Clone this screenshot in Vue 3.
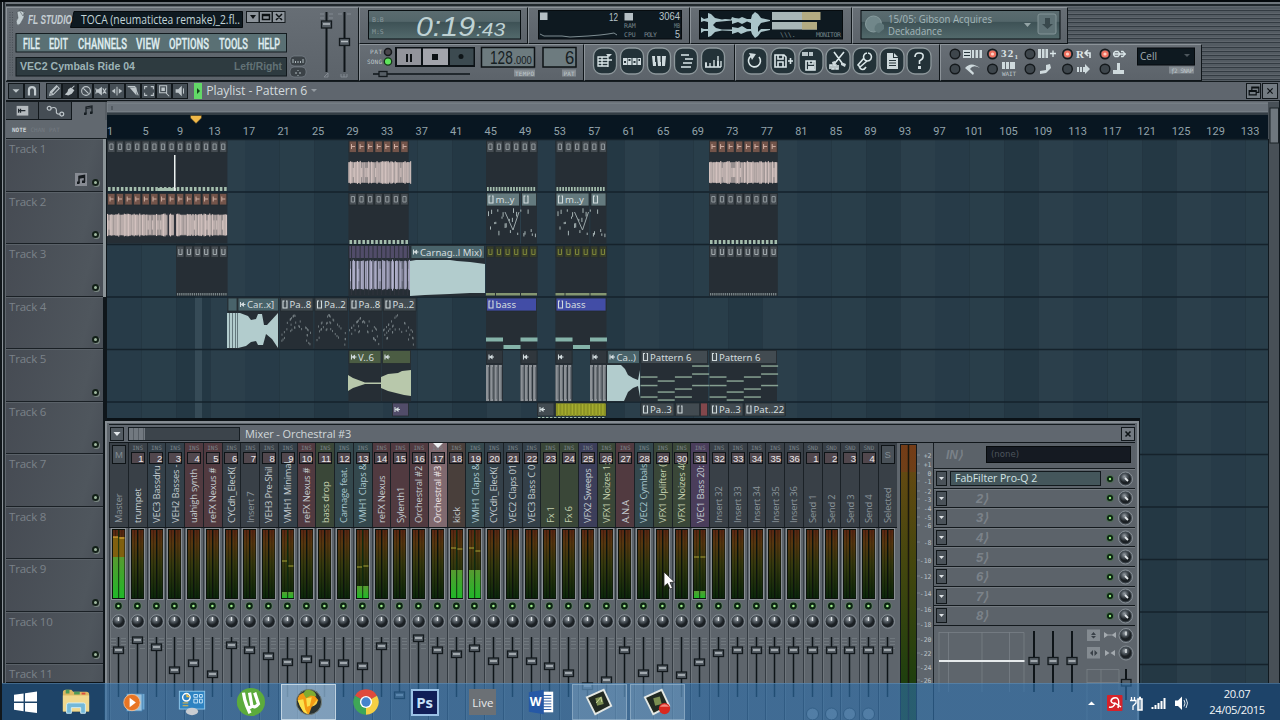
<script setup>
const menus = [
  ['FILE', 23, 17], ['EDIT', 49, 19], ['CHANNELS', 78, 49], ['VIEW', 136, 24],
  ['OPTIONS', 169, 40], ['TOOLS', 219, 29], ['HELP', 258, 22],
];

// s = stroked path, f = filled path, drawn on a 16x16 grid
const tools = [
  { s: 'M3 13L4 9L11 2L14 5L7 12Z M4 9L7 12', f: 'M4 9L11 2L12 3L5 11Z' },
  { s: 'M13 2L10 5', f: 'M9 4L13 7L10 11L6 13L2 12L5 9L6 6Z', on: true },
  { s: 'M8 3A5 5 0 1 0 8 13A5 5 0 1 0 8 3M5 5L11 11', f: '' },
  { s: 'M10 5L14 11M14 5L10 11M2 5L3 8L2 11', f: 'M3 6H5L9 3V13L5 10H3Z' },
  { s: 'M8 3V13', f: 'M6 5V11L2 8ZM10 5V11L14 8Z' },
  { s: 'M2 3H10L14 13', f: 'M4 4H12V13Z' },
  { s: 'M3 6V3H6M10 3H13V6M13 10V13H10M6 13H3V10', f: '' },
  { s: 'M3 2H11V10H3ZM10 10L14 14', f: 'M5 4H9V8H5Z' },
  { s: 'M12 5V11', f: 'M3 6H6L10 2V14L6 10H3Z' },
];

// drawn around 0,0
const windowButtons = [
  { x: 605, s: 'M-7 -4H3V5H-7ZM-7 -1H7M-7 2H3M-3 -4V5M3 -7V6', f: 'M1 -7H7L4 -4Z' },
  { x: 632, s: '', f: 'M-9 -3H-5V4H-9ZM-4.500 -3H-.5V4H-4.500ZM.5 -3H4.500V4H.5ZM5.500 -3H9V4H5.500Z', d: 'M-8 0H-6V2H-8ZM-3.500 -2H-1.500V0H-3.500ZM1.500 0H3.500V2H1.500ZM6.500 -2H8V0H6.500Z' },
  { x: 659, s: '', f: 'M-7 -5H-3V5H-6ZM-2 -5H2V5H-1ZM3 -5H7L6 5H3Z', d: 'M-4 -5H-2.500V1H-4ZM1.500 -5H3V1H1.500Z' },
  { x: 686, s: 'M-5 -6H3M-1 -2H7M-3 2H6M-5 6H5', f: '' },
  { x: 713, s: 'M-8 6H8M-7 6V1M-3 6V2M1 6V-1M5 6V-5M8 6V0', f: 'M-8 2H-6V6H-8ZM4 0H6V6H4Z' },
];
const fileButtons = [
  { x: 755, s: 'M-4 -5A6 6 0 1 0 4 -4', f: 'M-6 -8L1 -7L-3 -1Z' },
  { x: 783, s: 'M-8 -6H1L3 -4V6H-8ZM-5 -6V-2H0V-6M-5 6V1H0V6M5 0H10M7.500 -3V3', f: '' },
  { x: 811, s: 'M-5 0H4V9H-5ZM-2 0V3H2V0M-8 -9V-5M-6 -9V-5M-4 -5V-9M-1 -9V-5M1 -9V-5', f: 'M-3 5H3V9H-3Z' },
  { x: 838, s: 'M-4 -9L4 2M6 -9L-3 2M-8 8V4H-6V8H-4V4H-2V8H0V4', f: 'M-6 1L-3 0L-2 3L-5 5ZM3 1L8 3L7 6L3 4Z' },
  { x: 865, s: 'M3 -8A4 4 0 1 1 2 -8M-1 -3L-7 4L-5 6L2 0M-6 6Q-2 11 1 6', f: '' },
  { x: 892, s: '', f: 'M-5 -8H1V-3H6V8H-5ZM2 -8L6 -4H2Z', d: 'M-3 -1H4V0H-3ZM-3 1.500H4V2.500H-3ZM-3 4H4V5H-3Z' },
  { x: 919, s: 'M-4 -4Q-4 -8 0 -8Q5 -8 4 -4Q4 -2 .5 0V3', f: 'M-1 5H2V8H-1Z' },
];
const leds = [
  { x: 955, y: 54 }, { x: 992.5, y: 54, on: true }, { x: 1030, y: 54 }, { x: 1067.5, y: 54, on: true }, { x: 1105, y: 54, on: true },
  { x: 955, y: 69 }, { x: 992.5, y: 69 }, { x: 1030, y: 69 }, { x: 1067.5, y: 69 }, { x: 1105, y: 69 },
];

const bars = Array.from({ length: 34 }, (_, i) => ({ n: 1 + i * 4, x: i === 0 ? 110 : 145.5 + (i - 1) * 34.52 }));
const tracks = Array.from({ length: 11 }, (_, i) => i + 1);
const top = (t) => 139.5 + (t - 1) * 52.5;

const rnd = (n) => {
  const v = Math.sin(n * 91.7 + 13.3) * 4375.85;
  return v - Math.floor(v);
};

// playlist clips
const heads = [];
const bodies = [];
const labels = [];
const rects = [];
const marks = [];
// pattern clips carry a small open box, audio clips an arrow
const markPath = (x, y, audio) => (audio
  ? `M${x} ${y - 6}V${y - 1}M${x} ${y - 3.5}H${x + 5}M${x + 1} ${y - 3.5}L${x + 3} ${y - 5}V${y - 2}Z`
  : `M${x + 1.5} ${y - 7}H${x}V${y}H${x + 4}V${y - 7}H${x + 3}`);
const addMini = (t, x, count, kind) => {
  const y = top(t);
  bodies.push({ x, y: y + 1, w: count * 8.6, h: 50.5 });
  for (let i = 0; i < count; i++) {
    const cx = x + i * 8.6;
    heads.push({ x: cx + 0.6, y: y + 1.5, w: 7.4, h: 11.5, c: kind });
    marks.push({
      c: kind + '-m',
      d: kind === 'brown'
        ? `M${cx + 3} ${y + 4.5}V${y + 9.5}M${cx + 3} ${y + 7}H${cx + 6.5}`
        : `M${cx + 2.8} ${y + 4.5}V${y + 10}H${cx + 6}V${y + 4.5}${kind === 'gray' ? 'Z' : ''}`,
    });
  }
};
const addClip = (t, x, w, mark, text, kind, bodyH = 51) => {
  const y = top(t);
  bodies.push({ x, y: y + 1, w, h: bodyH });
  heads.push({ x: x + 0.5, y: y + 1, w: w - 1, h: 13, c: kind });
  if (mark) marks.push({ c: 'clip-m', d: markPath(x + 3, y + 11, mark === 'a') });
  if (text) labels.push({ x: x + 9.5, y: y + 11.3, t: text, c: 'clip-t' });
};
const addWave = (x, w, mid, half, c) => {
  rects.push({ x, y: mid - half * 0.9, w, h: half * 1.8, c: c + ' faint' });
  for (let i = 0; i < w; i += 1.4) {
    const r = rnd(i * 3 + x);
    const h = r > 0.85 ? half * 0.4 : half * (0.8 + r * 0.25);
    rects.push({ x: x + i, y: mid - h, w: r > 0.3 ? 1.1 : 0.6, h: h * 2, c });
  }
};
const addTicks = (x, w, y, h, step, c) => {
  for (let i = 1; i < w - 1; i += step) rects.push({ x: x + i, y, w: step * 0.6, h, c });
};

addMini(1, 107, 14, 'gray');
addTicks(107, 120, 187, 4, 4.3, 'pale');
rects.push({ x: 158, y: 188, w: 18, h: 3, c: 'pale' }, { x: 174, y: 155, w: 1.5, h: 36, c: 'white' });
addMini(1, 348.5, 7, 'brown');
addWave(348.5, 62, 172.5, 11.5, 'pink');
for (const x of [486, 555.5]) {
  addMini(1, x, 6, 'gray');
  addTicks(x, 51, 187, 4, 2.9, 'pale');
  addClip(2, x, 34, 'p', 'm..y', 'steel');
  addClip(2, x + 35, 16, 'p', '', 'steel');
  for (let i = 0; i < 24; i++) {
    rects.push({ x: x + 2 + ((i * 7.3) % 48), y: 208 + rnd(i + 4) * 29, w: 1, h: 2 + rnd(i) * 3, c: 'note' });
  }
  marks.push({ c: 'run', d: `M${x + 19} 212L${x + 27} 230L${x + 33} 212` });
  addMini(3, x, 6, 'olive');
  rects.push({ x, y: 293, w: 9, h: 2.5, c: 'green' }, { x: x + 10, y: 293, w: 24, h: 2.5, c: 'green' }, { x: x + 35, y: 293, w: 16, h: 2.5, c: 'green' });
  addClip(4, x, 51, 'p', 'bass', 'bass');
  rects.push({ x, y: 337.5, w: 17, h: 4, c: 'mint' }, { x: x + 17.5, y: 345, w: 17, h: 4, c: 'mint' }, { x: x + 34.5, y: 337.5, w: 17, h: 4, c: 'mint' });
  for (const dx of [0, 34.5]) {
    addClip(5, x + dx, 17, 'a', '', 'dark');
    for (let k = 0; k < 4; k++) {
      rects.push({ x: x + dx + k * 4.2, y: 365, w: 3.2, h: 36, c: 'ash' }, { x: x + dx + k * 4.2 + 2.2, y: 367, w: 0.7, h: 32, c: 'ashdark' });
    }
  }
}
addMini(1, 709, 8, 'brown');
addWave(709, 68, 172.5, 11.5, 'pink');

addMini(2, 107, 14, 'brown');
addWave(107, 120, 225, 11.5, 'pink');
rects.push({ x: 167.5, y: 213, w: 1.5, h: 24, c: 'gap' }, { x: 174, y: 213, w: 2, h: 24, c: 'gap' });
addMini(2, 348.5, 7, 'gray');
addTicks(348.5, 62, 240, 4, 4.3, 'pale');
addMini(2, 709, 8, 'gray');
addTicks(709, 68, 240, 4, 4.3, 'pale');

addMini(3, 176, 6, 'plain');
addTicks(176, 51, 293, 2.5, 2.1, 'dim');
addClip(3, 348.5, 61.5, '', '', 'purple');
addWave(350, 59, 275, 15.5, 'lilac');
for (let i = 0; i < 14; i++) rects.push({ x: 351 + i * 4.3, y: 246, w: 1, h: 49, c: 'gap' });
addClip(3, 410.5, 74.5, 'a', 'Carnag..l Mix)', 'teal');
addMini(3, 709, 8, 'plain');
addTicks(709, 68, 293, 2.5, 2.1, 'dim');

addClip(4, 227.5, 10, '', '', 'teal');
addClip(4, 237.5, 41.5, 'a', 'Car..x]', 'teal');
[[280, '8'], [314.5, '2'], [349, '8'], [383, '2']].forEach(([x, n]) => {
  addClip(4, x, 33.5, 'p', 'Pa..' + n, 'slate');
  for (let i = 0; i < 34; i++) {
    const px = rnd(i * 5 + x);
    const peak = Math.abs(px - 0.45) * 34;
    rects.push({ x: x + px * 31, y: 314 + peak + Math.floor(rnd(i + 2) * 3) * 6, w: 0.8, h: 2.2, c: 'spark' });
  }
});

addClip(5, 348.5, 33, 'a', 'V..6', 'moss');
addClip(5, 382, 29, 'a', '', 'moss');
addClip(5, 607, 33, 'a', 'Ca..)', 'teal');
for (const x of [640.5, 709.5]) {
  addClip(5, x, 67.5, 'p', 'Pattern 6', 'slate');
  [[377, 385.5, 397], [381, 392, 400], [377, 389, 397], [366, 374, 385.5]].forEach((ys, i) => {
    ys.forEach((y) => rects.push({ x: x + i * 17.2, y: y - 0.7, w: 17, h: 1.5, c: 'sage' }));
  });
}

addClip(6, 392, 17, 'a', '', 'purple', 13);
addClip(6, 537, 17.5, 'a', '', 'slate', 13);
addClip(6, 555, 51.5, '', '', 'yellow', 13);
addTicks(555, 51, 404, 12, 3.4, 'yellowline');
addTicks(537, 69, 417, 1.5, 4, 'pale');
addClip(6, 640.5, 34, 'p', 'Pa..3', 'slate', 13);
addClip(6, 675, 25, 'p', '', 'slate', 13);
addClip(6, 700, 8, '', '', 'red', 13);
addClip(6, 709.5, 34, 'p', 'Pa..3', 'slate', 13);
addClip(6, 744, 41.5, 'p', 'Pat..22', 'slate', 13);

// mixer strips: name, tint, fader position
const strips = [
  ['Master', 'plain dim', 650], ['trumpet', 'plain', 640], ['VEC3 Bassdru', 'blue', 647], ['VEH2 Basses -', 'blue', 670],
  ['uahigh synth', 'red', 663], ['reFX Nexus #', 'red', 674], ['CYCdh_ElecK(', 'plain', 645], ['Insert 7', 'plain dim', 650],
  ['VEH3 Pre-Shil', 'plain', 656], ['VMH1 Minimal', 'blue', 662], ['reFX Nexus #', 'red', 659], ['bass drop', 'green', 663],
  ['Carnage feat.', 'teal', 663], ['VMH1 Claps &', 'teal', 666], ['reFX Nexus', 'red', 646], ['Sylenth1', 'red', 695],
  ['Orchestral #2', 'red', 638], ['Orchestral #3', 'picked', 650], ['kick', 'brown', 654], ['VMH1 Claps &', 'teal', 648],
  ['CYCdh_ElecK(', 'blue', 661], ['VEC2 Claps 01', 'blue', 654], ['VEC3 Bass C 0', 'blue', 661], ['Fx 1', 'green', 666],
  ['Fx 6', 'green', 673], ['VFX2 Sweeps', 'purple', 686], ['VFX1 Noizes 1:', 'green', 680], ['A.N.A', 'red', 650],
  ['VEC2 Cymbals', 'teal', 673], ['VFX1 Uplifter (', 'green', 668], ['VFX1 Noizes 4(', 'green', 675], ['VEC1 Bass 20:', 'violet', 662],
  ['Insert 32', 'plain dim', 653], ['Insert 33', 'plain dim', 650], ['Insert 34', 'plain dim', 650], ['Insert 35', 'plain dim', 650],
  ['Insert 36', 'plain dim', 650], ['Send 1', 'plain dim', 650], ['Send 2', 'plain dim', 650], ['Send 3', 'plain dim', 650],
  ['Send 4', 'plain dim', 650], ['Selected', 'plain dim', 650],
].map(([name, tint, fader], i) => ({
  name, tint, fader,
  kind: i === 0 || i === 41 ? '' : i > 36 ? 'SND' : 'INS',
  num: i === 0 ? 'M' : i === 41 ? 'S' : i > 36 ? i - 36 : i,
  plain: i === 0 || i === 41,
}));
// top of the green part, then left and right peak marks
const levels = { 0: [557, 537, 538], 9: [592, 561, 566], 13: [586, 567, 566], 18: [570, 548, 549], 19: [570, 548, 551], 31: [591, 557, 557] };

const scale = [
  ['+2', 455], ['+1', 464], ['0', 473], ['-1', 481], ['-2', 491], ['-3', 499], ['-4', 508], ['-5', 517], ['-6', 525],
  ['-8', 542], ['-10', 560], ['-12', 576], ['-14', 593], ['-16', 609], ['-18', 624], ['-20', 639], ['-22', 653], ['-24', 667], ['-26', 680],
];
const slots = [1, 2, 3, 4, 5, 6, 7, 8];
</script>

<template>
  <div class="screen">
    <header class="top">
      <section class="panel main-panel">
        <svg viewBox="7 8 350 72" width="350" height="72">
          <path class="grip" d="M10 12V76M12.500 12V76" />
          <path class="logo" d="M17 12Q22 9 24 13Q25 17 22 21Q20 26 17 25Q15 21 18 18ZM19 10L25 12L23 16Z" />
          <path class="lcd-dark" d="M74 11.500H242.500V27.500H70.500Z" />
          <text class="brand" transform="translate(28 24) scale(.62 1)">FL STUDIO</text>
          <text class="song" x="81" y="24" textLength="159" lengthAdjust="spacingAndGlyphs">TOCA (neumatictea remake)_2.fl..</text>
          <rect v-for="x in [247, 260, 273]" :key="x" class="win-btn" :x="x - .5" y="11.500" width="12.500" height="11" />
          <path class="ink-fill" d="M250 15H256L253 19Z" />
          <path class="ink" d="M262.500 14.500H269.500V19.500H262.500ZM262 15.500H270M276 14L282 20M282 14L276 20" />
          <rect class="menu-bg" x="16" y="33.500" width="270.500" height="18.500" />
          <text v-for="m in menus" :key="m[0]" class="menu" :transform="`translate(${m[1]} 48.500) scale(.66 1)`" :textLength="m[2] / .66" lengthAdjust="spacingAndGlyphs">{{ m[0] }}</text>
          <rect class="hint-bg" x="16" y="57.500" width="270.500" height="18.500" />
          <text class="hint" x="20" y="70" textLength="115" lengthAdjust="spacingAndGlyphs">VEC2 Cymbals Ride 04</text>
          <text class="hint off" x="234" y="70" textLength="48" lengthAdjust="spacingAndGlyphs">Left/Right</text>
          <rect class="pill" x="290" y="56" width="16" height="10" rx="4" /><rect class="pill" x="290" y="67" width="16" height="10" rx="4" />
          <path class="glyph" d="M293 63V59M295.500 63V61M298 63V61M300.500 63V61M303 63V59M295 73H297M299 73H301M298 70V71M298 75V76" />
          <path class="rail" d="M326.500 12V72M344.500 12V72" />
          <path class="tickmark" d="M320 14H324M329 14H333M320 18H324M329 18H333M338 14H342M347 14H351M324 77L328 73V77ZM341 74V77H347V74M344 74V77" />
          <rect class="thumb" x="321.500" y="21" width="10" height="7" /><rect class="thumb" x="339.500" y="38.500" width="10" height="7" />
          <path class="thumb-line" d="M323 24H330M341 41.500H348" />
        </svg>
      </section>

      <div class="top-rows">
        <div class="top-row">
          <section class="panel w-time">
            <svg viewBox="360 8 166 35" width="166" height="35">
              <defs><linearGradient id="lcd" x2="0" y2="1"><stop offset="0" stop-color="#5b6c70" /><stop offset=".38" stop-color="#53666a" /><stop offset=".42" stop-color="#3e5256" /><stop offset="1" stop-color="#536a6c" /></linearGradient></defs>
              <rect class="lcd" x="368.500" y="10.500" width="152" height="28.500" />
              <text class="tiny faded" x="372" y="22">B:B</text><text class="tiny faded" x="372" y="34">M:S</text>
              <text class="clock" x="416" y="35.500" textLength="59" lengthAdjust="spacingAndGlyphs">0:19</text>
              <text class="clock small" x="476" y="35.500" textLength="29" lengthAdjust="spacingAndGlyphs">:43</text>
            </svg>
          </section>
          <section class="panel w-perf">
            <svg viewBox="529 8 160 35" width="160" height="35">
              <rect class="lcd-dark" x="538.500" y="10.500" width="143" height="28.500" />
              <path class="bar" d="M540 12.500H547.500V20H540ZM624.500 13H633V20.500H624.500Z" />
              <text class="digit" x="609" y="20.500" textLength="9" lengthAdjust="spacingAndGlyphs">12</text>
              <text class="digit" x="659" y="20" textLength="21" lengthAdjust="spacingAndGlyphs">3064</text>
              <text class="digit" x="675" y="37.500" textLength="5" lengthAdjust="spacingAndGlyphs">5</text>
              <text class="tiny" x="624" y="27.500">RAM</text><text class="tiny" x="674" y="27.500" textLength="6" lengthAdjust="spacingAndGlyphs">MB</text>
              <text class="tiny" x="624" y="37">CPU</text><text class="tiny" x="644" y="37" textLength="13">POLY</text>
              <path class="graph" d="M540 34L544 36H562L570 37L588 36L600 35L608 34L614 33L617 35" />
            </svg>
          </section>
          <section class="panel w-scope">
            <svg viewBox="691 8 160 35" width="160" height="35">
              <rect class="lcd-dark" x="699.500" y="10.500" width="143" height="28.500" />
              <path class="scope" d="M701 17L704 19L708 18V13L711 14L715 18L722 19.500L725 19L731 19.500L732 17L735 18L739 18.500L742 17L747 19H751L752 15L755 12L758 14L761 18L770 20V21L761 23L758 27V32L761 29H770V30L761 32L758 36L755 38L752 34L751 31L747 31.500L741 34L738 32L732 34V31L722 30.500L715 32L711 36L708 37V31L704 31L701 33V28L704 29H708V22L704 21L701 22ZM716 22L713 25L716 28L722 29.500H732V27L738 28L742 26L747 29H751V23L747 21.500L742 24L738 22L732 24V20.500Z" fill-rule="evenodd" />
              <path d="M772 12H820V20H772ZM772 22H817V29.500H772Z" fill="#a9b7b8" />
              <path d="M802 12H820.500V20H802ZM802 22H817V29.500H802Z" fill="#b3ab82" />
              <text class="tiny" x="780" y="37">\\\.</text><text class="tiny" x="816" y="37" textLength="25">MONITOR</text>
            </svg>
          </section>
          <section class="panel w-news">
            <svg viewBox="853 8 214 35" width="214" height="35">
              <rect class="lcd" x="861" y="10.500" width="199" height="28.500" />
              <circle cx="873.500" cy="24" r="8" class="globe" /><path d="M875 26Q879 20 884 25V29L879 33Q873 32 875 26Z" fill="#60777a" />
              <text class="news" x="888" y="23" textLength="104" lengthAdjust="spacingAndGlyphs">15/05: Gibson Acquires</text>
              <text class="news" x="888" y="35" textLength="54" lengthAdjust="spacingAndGlyphs">Deckadance</text>
              <path d="M1024 23H1031L1027.500 27Z" fill="#94a4a6" />
              <rect x="1038" y="14" width="18" height="20" rx="2" class="download" /><path d="M1045 18H1050V24H1053L1047.500 29L1042 24H1045Z" fill="#39494d" />
            </svg>
          </section>
          <div class="stripes"></div>
        </div>
        <div class="top-row">
          <section class="panel w-transport">
            <svg viewBox="360 45 222 35" width="222" height="35">
              <text class="tiny lit" x="370" y="54" textLength="12">PAT</text><text class="tiny lit" x="367" y="64" textLength="15">SONG</text>
              <circle class="led-ring" cx="388" cy="52" r="3.500" /><circle class="led-green" cx="388" cy="61.500" r="3.700" />
              <rect x="395" y="47" width="80" height="20" fill="#0c1216" />
              <rect x="397" y="48.500" width="24" height="16.500" fill="#92949b" /><rect x="423" y="48.500" width="25" height="16.500" fill="#a2a4ab" /><rect x="450" y="48.500" width="23.500" height="16.500" fill="#3c4a50" />
              <path class="ink-fill" d="M406 54H408V62H406ZM410 54H412V62H410ZM432 54H438V60H432Z" /><circle cx="461" cy="56.500" r="2.500" fill="#0e1518" />
              <rect class="lcd-light" x="481.500" y="47.500" width="53" height="19.500" /><rect class="lcd-light" x="543" y="47.500" width="33" height="19.500" />
              <text class="tempo" transform="translate(490 64) scale(.74 1)">128</text>
              <text class="tempo mini" transform="translate(513.500 64) scale(.9 1)">.000</text>
              <text class="tempo" transform="translate(565 64) scale(.9 1)">6</text>
              <rect class="tag" x="514" y="69.500" width="21" height="7" /><rect class="tag" x="562" y="69.500" width="14" height="7" />
              <text class="tiny lit" x="515" y="75.500" textLength="19">TEMPO</text><text class="tiny lit" x="563.500" y="75.500" textLength="11">PAT</text>
              <path class="rail thin" d="M373 74H470" /><rect class="thumb" x="379" y="71.500" width="8" height="5" />
            </svg>
          </section>
          <section class="panel w-wins">
            <svg viewBox="585 45 149 35" width="149" height="35">
              <g v-for="b in windowButtons" :key="b.x" :transform="`translate(${b.x} 61)`">
                <rect class="round-btn" x="-11.500" y="-13" width="23" height="26" rx="8" />
                <path class="glyph bright" :d="b.s" /><path class="glyph-fill" :d="b.f" /><path v-if="b.d" class="glyph-cut" :d="b.d" />
              </g>
            </svg>
          </section>
          <section class="panel w-files">
            <svg viewBox="736 45 203 35" width="203" height="35">
              <g v-for="b in fileButtons" :key="b.x" :transform="`translate(${b.x} 61)`">
                <rect class="round-btn" x="-12" y="-13" width="24" height="26" rx="8" />
                <path class="glyph bright heavy" :d="b.s" /><path class="glyph-fill" :d="b.f" /><path v-if="b.d" class="glyph-cut" :d="b.d" />
              </g>
            </svg>
          </section>
          <section class="panel w-opts">
            <svg viewBox="941 45 260 35" width="260" height="35">
              <g v-for="(l, i) in leds" :key="i">
                <circle class="led-opt" :cx="l.x" :cy="l.y" r="4.800" /><circle v-if="l.on" :cx="l.x" :cy="l.y" r="3.600" fill="#ef6f5e" /><circle v-if="l.on" :cx="l.x" :cy="l.y" r="1.600" fill="#ffd0c4" />
              </g>
              <path class="glyph-fill" d="M963 50H971V58H963ZM972 50H974V58H972ZM975.500 50H978V58H975.500ZM979.500 50H982V58H979.500ZM1038 49H1041V58H1038ZM1042 49H1044.500V58H1042ZM1045.500 49H1048V58H1045.500ZM1002 62H1005V69H1002ZM1006 62H1009V69H1006ZM1010 62H1015V69H1010ZM965 68Q971 61 980 68Q973 64 970 69L974 73L973 75ZM1046 65L1050 64L1051 68L1046 73L1040 74V71L1046 70ZM1077 67H1079V72H1077ZM1080 67H1082V72H1080ZM1083 67H1085V64L1090 69L1085 74V72H1083ZM1117 63H1120V70H1124V74H1113V70H1117Z" />
              <path class="glyph-cut" d="M964 52H970V53H964ZM964 55H970V56H964Z" />
              <path class="glyph bright" d="M1050 53.500H1056M1053 50.500V57M1113 54H1126M1115 51.500H1118Q1121 54 1118 56.500H1115Q1112 54 1115 51.500M1121 51.500H1123Q1126 54 1123 56.500H1121" />
              <text class="opt" x="1001" y="57" textLength="17">32₁</text><text class="opt" x="1076" y="58">R</text><path class="glyph bright heavy" d="M1085 53H1090V58M1088 50L1085 53L1088 56" />
              <text class="tiny lit" x="1002" y="75.500" textLength="14">WAIT</text>
              <rect class="lcd-dark" x="1137.500" y="48" width="57" height="17" /><text class="cell" x="1140" y="60" textLength="17" lengthAdjust="spacingAndGlyphs">Cell</text>
              <path d="M1184 54H1190L1187 57Z" fill="#4c565c" /><rect class="tag" x="1169" y="66.500" width="25" height="7" /><text class="tiny lit" x="1171" y="72.500" textLength="22">ƒ2 SNAP</text>
            </svg>
          </section>
          <div class="stripes"></div>
        </div>
      </div>
    </header>

    <nav class="toolbar">
      <div class="group">
        <span class="tool"><svg viewBox="0 0 16 16"><path class="w" d="M4 6H12L8 10Z" /></svg></span>
        <span class="tool"><svg viewBox="0 0 16 16"><path class="o" d="M4.500 13V7Q4.500 3.500 8 3.500Q11.500 3.500 11.500 7V13" /></svg></span>
      </div>
      <div class="group">
        <span v-for="(t, i) in tools" :key="i" class="tool" :class="{ on: t.on }">
          <svg viewBox="0 0 16 16"><path class="w" :d="t.f" /><path class="l" :d="t.s" /></svg>
        </span>
      </div>
      <span class="play-flag"><svg viewBox="0 0 8 16"><path d="M3 5L6 8L3 11Z" /></svg></span>
      <span class="pl-title">Playlist - Pattern 6</span><svg class="drop" viewBox="0 0 8 6"><path d="M1 1H7L4 4Z" /></svg>
      <div class="group end">
        <span class="tool"><svg viewBox="0 0 16 16"><path class="k" d="M5.500 7V3.500H13.500V9.500H10.500M5 4.500H13M2.500 7.500H10.500V12.500H2.500ZM2 8.500H10" /></svg></span>
        <span class="tool"><svg viewBox="0 0 16 16"><path class="k" d="M5 5L11 11M11 5L5 11" /></svg></span>
      </div>
    </nav>

    <main class="playlist">
      <aside class="side">
        <div class="tabs">
          <span class="tab"><svg viewBox="0 0 33 18"><rect x="11" y="4" width="12" height="10" fill="#b4babe" /><path d="M13 7V11M13 9H20M15 7V11" stroke="#20282e" stroke-width="1.300" /></svg></span>
          <span class="tab"><svg viewBox="0 0 33 18"><path class="l" d="M12 6.500Q18 4 18 9Q17 13 22 12.500" /><circle class="l" cx="10.500" cy="6.500" r="2" /><circle class="l" cx="23.500" cy="12.500" r="2" /></svg></span>
          <span class="tab active"><svg viewBox="0 0 33 18"><path d="M14 12V5L20 4V11M14 6.500L20 5.500" stroke="#171e23" stroke-width="1.200" fill="none" /><path d="M12 10.500H14.500V13H12ZM18 9.500H20.500V12H18Z" fill="#171e23" /></svg></span>
        </div>
        <div class="modes"><b>NOTE</b><span>CHAN</span><span>PAT</span></div>
        <div class="track-list">
          <div v-for="t in tracks" :key="t" class="track" :class="{ used: t < 4 }">
            <span class="track-name">Track {{ t }}</span>
            <svg v-if="t === 1" class="note-box" viewBox="0 0 12 13"><path d="M0 0H12V13H0Z" fill="#878b93" /><path d="M4 10V3.500L9.500 2.500V9M4 5L9.500 4" stroke="#14191d" stroke-width="1.500" fill="none" /><path d="M2 8.500H4.500V11H2ZM7 7.500H10V10H7Z" fill="#14191d" /></svg>
            <i class="dot"></i>
          </div>
        </div>
      </aside>
      <svg class="arrange" viewBox="107 101 1173 619" width="1173" height="619">
        <defs>
          <pattern id="bands" x="107" y="0" width="138" height="60" patternUnits="userSpaceOnUse">
            <rect width="138" height="60" fill="#273b48" /><rect x="34" width="35" height="60" fill="#293e4a" /><rect x="69" width="34" height="60" fill="#243844" /><rect x="103" width="35" height="60" fill="#2b3f4b" />
            <path d="M34.500 0V60M69.500 0V60M103.500 0V60" stroke="#22343f" stroke-width=".7" />
          </pattern>
          <clipPath id="view"><rect x="107" y="139" width="1161" height="280" /></clipPath>
        </defs>
        <rect x="107" y="101" width="1173" height="619" fill="#5f666d" />
        <rect class="hscroll" x="107" y="103" width="1162" height="9" />
        <path d="M112 106V110" stroke="#3a4248" />
        <rect x="107" y="112.500" width="1162" height="3" fill="#333d44" />
        <rect x="107" y="115" width="1162" height="24" fill="#081621" />
        <text v-for="b in bars" :key="b.n" class="bar-no" :x="b.x" y="135">{{ b.n }}</text>
        <path d="M190.500 115.500H201.500V118L196 123.500L190.500 118Z" fill="#f0b848" stroke="#3c3420" stroke-width=".5" />
        <rect x="107" y="139" width="1161" height="544" fill="url(#bands)" />
        <rect x="195" y="139" width="7" height="281" fill="#435964" opacity=".6" />
        <path v-for="t in tracks" :key="'l' + t" class="track-line" :d="`M107 ${top(t)}H1268`" />
        <g clip-path="url(#view)">
          <rect v-for="(b, i) in bodies" :key="'b' + i" class="body" :x="b.x" :y="b.y" :width="b.w" :height="b.h" />
          <rect v-for="(h, i) in heads" :key="'h' + i" class="head" :class="h.c" :x="h.x" :y="h.y" :width="h.w" :height="h.h" />
          <rect v-for="(r, i) in rects" :key="'r' + i" :class="r.c" :x="r.x" :y="r.y" :width="r.w" :height="r.h" />
          <path class="mass" d="M410 261L416 260H450L457 261L470 262L485 264V293L470 293L450 294L425 295L410 296Z" />
          <path class="mass" d="M227 313L240 313L248 316L251 320L256 319L258 314H262L264 325H267L278 313V348L272 339L266 334L263 345H258L256 341L251 342L246 346L238 348H227Z" />
          <path d="M229.500 313V348M232.500 313V348M235.500 313V348M237.500 313V348" stroke="#44555c" stroke-width=".7" />
          <path class="mass green" d="M348 375L353 378L365 382.500H381V377L388 374L398 373L402 371L411 370V396L404 395L396 393L388 391L381 388V384H365L353 388L348 391Z" />
          <path class="mass" d="M607 365H621L625 369L628 375L633 378L638 380L640 370V397L638 386L633 388L628 392L624 401H607Z" />
          <path v-for="(m, i) in marks" :key="'m' + i" class="mark" :class="m.c" :d="m.d" />
          <text v-for="(l, i) in labels" :key="'t' + i" :class="l.c" :x="l.x" :y="l.y">{{ l.t }}</text>
        </g>
        <rect x="107" y="418" width="1033" height="3" fill="#0a1116" />
        <rect x="1268" y="102" width="12" height="581" fill="#485057" /><rect class="vthumb" x="1270" y="108" width="8.500" height="35" />
        <path d="M1268.500 139V683" stroke="#11191f" /><path d="M1279.500 101V683" stroke="#11191f" />
      </svg>
    </main>

    <section class="mixer">
      <div class="mix-title">
        <span class="mix-btn"><svg viewBox="0 0 12 12"><path d="M2.500 4H9.500L6 8Z" fill="#e2e7ea" /></svg></span>
        <span class="mix-scroll"><i></i></span>
        <span class="mix-name">Mixer - Orchestral #3</span>
        <span class="mix-btn close"><svg viewBox="0 0 12 12"><path d="M3.500 3.500L8.500 8.500M8.500 3.500L3.500 8.500" stroke="#0e1417" stroke-width="1.600" /></svg></span>
      </div>
      <div class="mix-body">
        <div class="strips">
          <div v-for="(s, i) in strips" :key="i" class="strip">
            <div class="strip-head" :class="s.tint">
              <span class="kind">{{ s.kind }}</span>
              <span class="num" :class="{ letter: s.plain }">{{ s.num }}</span>
              <span class="name">{{ s.name }}</span>
              <i v-if="i === 17" class="pick"></i>
            </div>
            <svg class="strip-svg" viewBox="0 528 18.750 192" width="18.750" height="192">
              <rect class="frame" x="2.500" y="528.500" width="14" height="71" />
              <rect x="4" y="530" width="5" height="68" fill="url(#meter)" /><rect x="10.400" y="530" width="5" height="68" fill="url(#meter)" />
              <path d="M6.500 530V598M12.900 530V598" stroke="#000" stroke-width="1" opacity=".25" />
              <g v-if="levels[i]">
                <rect v-if="i === 0" x="4" y="537" width="11.400" height="20" fill="#80600f" />
                <rect x="4" :y="levels[i][0]" width="11.400" :height="598 - levels[i][0]" fill="url(#level)" />
                <path :d="`M4 ${levels[i][1]}H9.200M10.200 ${levels[i][2]}H15.400`" :stroke="i === 0 ? '#f0b840' : '#a5a336'" stroke-width="1.200" />
                <path d="M9.700 530V598" stroke="#123010" stroke-width="1" />
              </g>
              <circle cx="9.400" cy="606" r="4.500" fill="#5e7865" /><circle cx="9.400" cy="606" r="3.400" fill="#0c2412" /><circle cx="9.400" cy="606" r="1.300" fill="#a0f08c" />
              <circle cx="9.700" cy="621.500" r="6.800" class="knob-ring" /><circle cx="9.700" cy="621.500" r="5.800" fill="url(#knob)" /><path d="M9.500 617V621" stroke="#e0e4e6" stroke-width="1.300" />
              <path class="scale-lines" d="M2 638.500H7M12 638.500H17M2 641.500H7M12 641.500H17M2 644.500H7M12 644.500H17M2 648.500H7M12 648.500H17" />
              <path class="rail thin" d="M9.500 637V697" />
              <rect class="thumb" x="4.500" :y="s.fader - 3" width="10" height="6.500" /><path class="thumb-line" :d="`M6 ${s.fader}H13`" />
              <circle v-if="i > 36 && i < 41" cx="9.500" cy="714" r="6" fill="#8b949c" stroke="#3c444b" />
              <path d="M.5 528V720" stroke="#343b42" stroke-width="1" /><path d="M1.500 600V720" stroke="#7a8188" stroke-width=".6" />
            </svg>
          </div>
        </div>
        <svg class="big-meter" viewBox="898 443 36 277" width="36" height="277">
          <defs>
            <linearGradient id="meter" x2="0" y2="1"><stop offset="0" stop-color="#5a2713" /><stop offset=".2" stop-color="#56370f" /><stop offset=".5" stop-color="#35390e" /><stop offset="1" stop-color="#0b260b" /></linearGradient>
            <linearGradient id="level" x2="0" y2="1"><stop offset="0" stop-color="#579a30" /><stop offset="1" stop-color="#20b828" /></linearGradient>
            <radialGradient id="knob" cx=".4" cy=".3"><stop offset="0" stop-color="#9aa1a7" /><stop offset=".5" stop-color="#525a61" /><stop offset="1" stop-color="#1b2024" /></radialGradient>
            <linearGradient id="big" x2="0" y2="1"><stop offset="0" stop-color="#743c17" /><stop offset=".1" stop-color="#6e3f18" /><stop offset=".1" stop-color="#624912" /><stop offset=".4" stop-color="#47470e" /><stop offset=".85" stop-color="#1f3f0e" /></linearGradient>
          </defs>
          <rect x="900.500" y="444.500" width="16" height="276" fill="url(#big)" stroke="#12181c" /><path d="M908.500 445V720" stroke="#1a170c" stroke-width="1.500" />
          <g v-for="n in scale" :key="n[0]"><text class="db" x="931.500" :y="n[1] + 2.500">{{ n[0] }}</text><path :d="`M917 ${n[1]}H920`" stroke="#90979d" stroke-width=".6" /></g>
          <path d="M933.500 443V720" stroke="#191f24" />
        </svg>
        <div class="fx">
          <div class="fx-in"><span class="in">IN⟩</span><span class="none">(none)</span></div>
          <div v-for="n in slots" :key="n" class="slot">
            <span class="slot-btn"><svg viewBox="0 0 9 13"><path d="M2 5H7L4.500 8Z" fill="#dfe4e7" /></svg></span>
            <span v-if="n === 1" class="slot-name">FabFilter Pro-Q 2</span>
            <span v-else class="slot-no">{{ n }}⟩</span>
            <svg class="slot-ctl" viewBox="0 0 32 18" width="32" height="18"><circle cx="7" cy="9" r="4" fill="#4d6a54" /><circle cx="7" cy="9" r="3" fill="#0a2410" /><circle cx="7" cy="9" r="1.200" fill="#90e878" /><circle cx="22.500" cy="9" r="7" class="knob-ring" /><circle cx="22.500" cy="9" r="5.500" fill="url(#knob)" /><path d="M22 8L25 11" stroke="#e4e8ea" stroke-width="1.800" /></svg>
          </div>
          <svg class="eq" viewBox="934 626 202 94" width="202" height="94">
            <path class="eq-grid" d="M939 632.500H1024V692M939 632V692M948.500 632V692M982 632V692M1009.500 632V692M1087 669.500H1119V690M1101 669V720M1087 682.500H1119M1087 669V720" />
            <path d="M939 661H1024.500" stroke="#e6eaec" stroke-width="2" />
            <g v-for="x in [1034, 1053, 1072]" :key="x">
              <path class="rail" :d="`M${x} 631V692`" /><rect class="thumb" :x="x - 5" y="657.500" width="10" height="7" /><path class="thumb-line" :d="`M${x - 3.500} 661H${x + 3.500}`" />
              <circle cx="0" :cx="x" cy="714" r="6" fill="#8b949c" stroke="#3c444b" />
            </g>
            <path class="rail" d="M1126 669V700" /><rect class="thumb" x="1121.500" y="679.500" width="9.500" height="6.500" />
            <rect class="tag" x="1087" y="629.500" width="13" height="11.500" /><rect class="tag" x="1087" y="647" width="13" height="11.500" />
            <path d="M1093.500 632L1096 635H1091ZM1093.500 638.500L1096 636H1091ZM1090 653L1093 650V656ZM1097.500 653L1094.500 650V656Z" fill="#3a4148" />
            <path d="M1104 632L1108.500 635L1104 638ZM1116 632L1111.500 635L1116 638ZM1108 634.500H1112V635.500H1108ZM1105 650L1109.500 653L1105 656ZM1115 650L1110.500 653L1115 656Z" fill="#a3a9ae" />
            <g v-for="y in [635.5, 653]" :key="y"><circle class="knob-ring" cx="1126" :cy="y" r="7" /><circle cx="1126" :cy="y" r="5.500" fill="url(#knob)" /><path :d="`M1126 ${y - 4}V${y}`" stroke="#e0e4e6" stroke-width="1.500" /></g>
          </svg>
        </div>
      </div>
    </section>

    <svg class="cursor" viewBox="0 0 14 20"><path d="M1 1V15.500L4.500 12.500L7 18L9.500 17L7 11.500L11.500 11Z" fill="#fff" stroke="#222" stroke-width=".8" /></svg>

    <footer class="taskbar">
      <span class="start"><svg viewBox="0 0 26 24" width="25" height="23"><path d="M1 4L11 2.500V11H1ZM12.500 2.300L25 .5V11H12.500ZM1 12.500H11V21L1 19.500ZM12.500 12.500H25V23L12.500 21.300Z" fill="#fff" /></svg></span>
      <span class="task"><svg viewBox="0 0 32 32"><path d="M2 6Q2 3 5 3H11L13 5H27Q30 5 30 8V26H2Z" fill="#dcb863" /><path d="M5 3H9V7H5ZM14 5H20V8H14Z" fill="#4e9a58" /><path d="M22 6H26V8H22Z" fill="#d94f3e" /><path d="M2 9H30V26H2Z" fill="#f1d98e" /><path d="M6 28V19Q6 17 8 17H24Q26 17 26 19V28H21V22H11V28Z" fill="#73b8d8" stroke="#d0eef8" /></svg></span>
      <span class="task"><svg class="sm" viewBox="0 0 32 32"><path d="M10 5H30V25H10Z" fill="#6da7d2" /><path d="M7 5H27V27H7Z" fill="#9bc4df" stroke="#3d7aaa" /><circle cx="14" cy="16" r="10.500" fill="#e87524" stroke="#f7c79b" /><path d="M11 10L19 16L11 22Z" fill="#fff" /></svg></span>
      <span class="task"><svg viewBox="0 0 32 32"><rect x="2.500" y="4.500" width="27" height="19" fill="#2e83c2" stroke="#91c8ea" /><circle cx="10" cy="11" r="4" fill="none" stroke="#fff" stroke-width="1.500" /><path d="M10 7V11H14Z" fill="#f4bd3a" /><path d="M18 8H22V11H18ZM24 8H27V11H24ZM18 13H22V17H18ZM24 13H27V17H24Z" stroke="#cce8fa" fill="none" /><path d="M6 17H12M6 20H12" stroke="#f4bd3a" /><ellipse cx="16" cy="26" rx="6.500" ry="4" fill="#c9cdd2" /></svg></span>
      <span class="task"><svg viewBox="0 0 32 32"><circle cx="17" cy="16" r="15" fill="#5cab3c" /><path d="M9 6Q10 14 12.500 20Q15 24 18 20L15.500 6M18 20Q21.500 23 25 18L21 6M12.500 20L16 28" fill="none" stroke="#fff" stroke-width="3.500" /></svg></span>
      <span class="task active"><svg viewBox="0 0 32 32"><circle cx="17" cy="16" r="13.500" fill="#2a3231" stroke="#76827f" /><path d="M5 14Q5 8 11 6L22 8L27 14L20 21L17 29L11 27Z" fill="#f39a14" /><path d="M5 14L11 13L13 24L16 29Q9 27 5 14ZM14 12L20 11L18 20L15 21Z" fill="#fbe04c" /><path d="M11 7Q13 2 17 3Q24 4 25 10L19 9L14 12Z" fill="#7fab31" /><path d="M20 21L26 13Q27 19 20 21Z" fill="#fbd045" /></svg></span>
      <span class="task"><svg viewBox="0 0 32 32"><path d="M16 16L4.300 9.250A13.500 13.500 0 0 1 27.700 9.250Z" fill="#df4a3c" /><path d="M16 16L16 29.500A13.500 13.500 0 0 1 4.300 9.250Z" fill="#3ea657" /><path d="M16 16L27.700 9.250A13.500 13.500 0 0 1 16 29.500Z" fill="#f6cf43" /><circle cx="16" cy="16" r="6.500" fill="#fff" /><circle cx="16" cy="16" r="5" fill="#4584cc" /></svg></span>
      <span class="task"><b class="ps">Ps</b></span>
      <span class="task"><b class="live">Live</b></span>
      <span class="task"><svg viewBox="0 0 32 32"><rect x="16" y="5" width="13" height="22" fill="#fff" /><path d="M18 9H27M18 12H27M18 15H27M18 18H27M18 21H27M18 24H27" stroke="#2958a0" stroke-width="1" /><path d="M3 5.500L19 3V29L3 26.500Z" fill="#2558a6" /><text x="4" y="20.500" class="word">W</text></svg></span>
      <span class="task open"><svg viewBox="0 0 32 32"><path d="M3 11L21 3L29 20L12 29Z" fill="#222a22" stroke="#e4e8e4" stroke-width="2" /><path d="M12 12L19 10L21 18L14 20Z" fill="#7c8f52" /><path d="M13 17L18 11L19 16" stroke="#d0dca0" fill="none" /></svg></span>
      <span class="task open"><svg viewBox="0 0 32 32"><path d="M3 11L21 3L29 20L12 29Z" fill="#222a22" stroke="#e4e8e4" stroke-width="2" /><path d="M12 12L19 10L21 18L14 20Z" fill="#7c8f52" /><circle cx="24" cy="23" r="6" fill="#d9281f" /><path d="M19 21Q24 16 29 21Z" fill="#f38a7e" /></svg></span>
      <div class="tray">
        <svg viewBox="1088 683 114 37" width="114" height="37">
          <path d="M1091 704L1094.500 700.500L1098 704Z" fill="#fff" />
          <rect x="1110" y="694" width="15.500" height="16" rx="1" fill="#d6222a" /><path d="M1112 706Q1116 707 1118 703M1121 707Q1123 699 1120 697Q1115 696 1114 700Q1115 703 1118 702L1124 706" stroke="#fff" stroke-width="1.500" fill="none" />
          <path d="M1133 699.500H1139V702L1136 705V709M1134.500 696V700M1137.500 696V700" stroke="#fff" stroke-width="1.300" fill="none" /><path d="M1141 698H1145V709H1141ZM1142 696.500H1144" stroke="#fff" stroke-width="1.500" fill="#8ea6bb" />
          <path d="M1155.500 708V706M1158.500 708V704M1161.500 708V702M1164.500 708V700M1167.500 708V697" stroke="#fff" stroke-width="2" />
          <path d="M1178 699.500H1181L1185 695.500V709L1181 705H1178Z" fill="#fff" /><path d="M1187 699Q1189 702 1187 705.500M1189 697.500Q1192 702 1189 707" stroke="#dce6ee" fill="none" />
        </svg>
        <div class="time"><span>20.07</span><span>24/05/2015</span></div>
      </div>
    </footer>
  </div>
</template>

<style>
body { background: #0b1722; overflow: hidden; }
</style>

<style scoped>
.screen {
  position: relative;
  width: 1280px;
  height: 720px;
  box-sizing: border-box;
  overflow: hidden;
  display: flex;
  flex-direction: column;
  padding-left: 6px;
  border-top: 2px solid #05090c;
  background: #5f666d;
  font-family: "Open Sans", "Noto Sans", sans-serif;
  box-shadow: inset 2px 0 #11171b, inset 3px 0 #8b9298, inset 5px 0 #22292e;
}
svg { display: block; }

/* header */
.top { display: flex; height: 79px; flex: none; box-sizing: border-box; padding-top: 5px; background: linear-gradient(#6f767c 0 2px, #20272c 2px 4px, #5f666d 4px); }
.top-rows { flex: 1; display: flex; flex-direction: column; gap: 0; min-width: 0; }
.top-row { display: flex; height: 37px; gap: 0; }
.panel { flex: none; box-sizing: border-box; border: 1px solid; border-color: #8c9399 #10161a #10161a #8c9399; background: linear-gradient(#676e75, #5c636a); overflow: hidden; }
.main-panel { width: 353px; height: 74px; }
.w-time { width: 169px; }
.w-perf { width: 162px; }
.w-scope { width: 162px; }
.w-news { width: 216px; }
.w-transport { width: 225px; }
.w-wins { width: 151px; }
.w-files { width: 205px; }
.w-opts { width: 262px; }
.stripes { flex: 1; background: repeating-linear-gradient(#535b62 0 2px, #5e656c 2px 3px, #333b42 3px 4px); }

.grip { stroke: #4a5157; stroke-width: 1; stroke-dasharray: 1 1.500; }
.logo { fill: #c3ced2; stroke: #3e474c; stroke-width: .5; }
.brand { font: italic bold 13.500px "Liberation Sans", sans-serif; fill: #c5ced3; }
.lcd-dark { fill: #0e1920; stroke: #060b0e; }
.song { font: 12px "Open Sans", sans-serif; fill: #c2d5d8; }
.win-btn { fill: #8c939a; stroke: #161c20; }
.ink { fill: none; stroke: #0c1114; stroke-width: 1.500; }
.ink-fill { fill: #0c1114; }
.menu-bg { fill: #5a7074; stroke: #141c20; }
.menu { font: 500 14.500px Roboto, sans-serif; fill: #dfecef; stroke: #dfecef; stroke-width: .3; }
.hint-bg { fill: #2e3b40; stroke: #11181c; }
.hint { font: bold 10.500px "Liberation Sans", sans-serif; fill: #9db3b6; }
.hint.off { fill: #627276; }
.pill { fill: #3b4247; stroke: #79818a; stroke-width: .7; }
.glyph { fill: none; stroke: #aeb9be; stroke-width: 1; }
.glyph.bright { stroke: #dce8ea; stroke-width: 1.300; }
.glyph.heavy { stroke-width: 1.600; }
.glyph-fill { fill: #cfdadd; }
.glyph-cut { fill: #29373d; }
.rail { stroke: #0e1418; stroke-width: 2; fill: none; }
.rail.thin { stroke-width: 1.500; }
.tickmark { stroke: #8b9299; fill: none; stroke-width: .8; }
.thumb { fill: #565e65; stroke: #13191d; stroke-width: 1.300; }
.thumb-line { stroke: #b5bcc1; stroke-width: 1.600; }
.lcd { fill: url(#lcd); stroke: #090f12; }
.tiny { font: 6.500px "DejaVu Sans Mono", monospace; fill: #76868b; }
.tiny.lit { fill: #bdc6ca; font-size: 6px; }
.tiny.faded { fill: #8a999c; }
.clock { font: italic 28px "Liberation Sans", sans-serif; fill: #bfd2d4; }
.clock.small { font-size: 19px; }
.bar { fill: #b5bfc4; }
.digit { font: 11px "Liberation Sans", sans-serif; fill: #b8c5cb; }
.graph { stroke: #7e8d92; fill: none; }
.scope { fill: #abc5ca; }
.globe { fill: #71878a; stroke: #879b9d; }
.news { font: 10.500px "Open Sans", sans-serif; fill: #a4b7ba; }
.download { fill: #5f7276; stroke: #839497; }
.led-ring { fill: #4a474c; stroke: #15191c; stroke-width: 1.500; }
.led-green { fill: #5fe65c; stroke: #16341a; stroke-width: 1.300; }
.lcd-light { fill: #6d7b7f; stroke: #0d1215; stroke-width: 1.500; }
.tempo { font: 18.500px "Liberation Sans", sans-serif; fill: #162023; }
.tempo.mini { font-size: 10.500px; }
.tag { fill: #848b91; }
.round-btn { fill: #233238; stroke: #8d979b; stroke-width: 1.300; }
.led-opt { fill: #3e464c; stroke: #14191c; stroke-width: 1.400; }
.opt { font: bold 11px "Liberation Serif", serif; fill: #dde3e6; }
.cell { font: 10.500px "Open Sans", sans-serif; fill: #a3afb4; }

/* toolbar */
.toolbar { display: flex; align-items: center; height: 20px; flex: none; border-top: 1px solid #161d21; border-bottom: 1px solid #12181c; box-sizing: border-box; padding: 0 2px 1px; background: #5f666e; }
.group { display: flex; margin-right: 6.500px; }
.group.end { margin: 0 0 0 auto; }
.tool { width: 15.750px; height: 16px; box-sizing: border-box; border: 1px solid #12181c; background: #454e55; }
.tool.on { background: #272e34; }
.tool svg { width: 14px; height: 14px; }
.tool .w { fill: #bec6ca; }
.tool .l, .tab .l { fill: none; stroke: #bec6ca; stroke-width: 1.200; }
.tool .o { fill: none; stroke: #c4ccd0; stroke-width: 2.500; }
.end .tool { background: #737b82; margin-left: 1px; }
.tool .k { fill: none; stroke: #0b1013; stroke-width: 1.400; }
.play-flag { width: 8px; height: 16px; background: #62d867; fill: #14451a; }
.pl-title { margin-left: 4px; font: 12.300px/17px "Open Sans", sans-serif; color: #d2dadd; letter-spacing: -.1px; }
.drop { width: 8px; height: 6px; margin-left: 3px; fill: #959ca2; }

/* playlist */
.playlist { display: flex; height: 619px; flex: none; }
.side { width: 101px; height: 581px; flex: none; display: flex; flex-direction: column; overflow: hidden; background: #565d64; border-bottom: 1px solid #0d1215; }
.tabs { display: flex; height: 19px; flex: none; border-top: 1px solid #141a1e; box-sizing: border-box; }
.tab { width: 33px; height: 18px; box-sizing: border-box; background: #454d54; border-right: 1px solid #12181c; border-bottom: 1px solid #12181c; }
.tab.active { background: #626970; border: 0; }
.modes { height: 19px; flex: none; padding-left: 6px; display: flex; align-items: center; gap: 4px; font: 6px "DejaVu Sans Mono", monospace; color: #747b81; background: #61686f; border-bottom: 1px solid #161d21; box-sizing: border-box; }
.modes b { color: #cdd4d8; }
.track-list { background: #0f161b; }
.track { height: 52.500px; width: 97px; box-sizing: border-box; display: flex; align-items: flex-end; padding: 0 4px 5px 3px; background: linear-gradient(105deg, #464b53, #4f565d 80%, #484e56); border-bottom: 1px solid #1a2025; border-top: 1px solid #5a6168; }
.track.used { box-shadow: 3px 0 #8b9498; }
.track-name { align-self: flex-start; flex: 1; font: 11.500px/17px "Open Sans", sans-serif; color: #7b8289; letter-spacing: -.2px; }
.note-box { width: 12px; height: 13px; margin-right: 5px; }
.dot { width: 3px; height: 3px; border-radius: 50%; background: #9fb89f; border: 2px solid #132018; box-shadow: 1px 1px #7c8a84; }
.arrange { flex: none; }
.hscroll { fill: #6b737b; stroke: #8b9299; stroke-width: .7; }
.bar-no { font: 11px Roboto, sans-serif; fill: #93a3aa; text-anchor: middle; }
.track-line { stroke: #15222b; stroke-width: 1.500; }
.vthumb { fill: #6f777e; stroke: #1b2227; }
.body { fill: #262e35; }
.head { stroke: #252c31; stroke-width: .8; }
.gray, .plain { fill: #464d53; }
.brown { fill: #73544a; }
.olive { fill: #363d29; }
.mark { fill: none; stroke-width: 1; stroke: #8f979b; }
.plain-m { stroke: #a3abae; }
.brown-m { stroke: #cfaea2; }
.olive-m { stroke: #7d853a; }
.clip-m { stroke: #d2dbdd; stroke-width: 1.100; }
.run { stroke: #9aa6a8; }
.clip-t { font: 9.600px "Noto Sans", "DejaVu Sans", sans-serif; fill: #d4dddf; }
.steel { fill: #647a7e; }
.dark { fill: #30373d; }
.slate { fill: #424b51; }
.teal { fill: #49636a; }
.purple { fill: #514c69; }
.bass { fill: #424da6; }
.moss { fill: #4b5c43; }
.yellow { fill: #a6ad2e; }
.yellowline { fill: #8b9225; }
.red { fill: #82474c; }
.pale { fill: #a4bdad; }
.white { fill: #ecf1f1; }
.pink { fill: #d3c2bf; }
.lilac { fill: #b4b3cf; }
.faint { opacity: .65; }
.gap { fill: #2f333c; }
.note { fill: #a6b3b4; }
.green { fill: #849671; }
.mint { fill: #85b3a9; }
.ash { fill: #8d9297; }
.ashdark { fill: #595f66; }
.dim { fill: #7a8688; }
.spark { fill: #7d878b; }
.sage { fill: #86a091; }
.mass { fill: #b2cccd; }
.mass.green { fill: #b8c8ab; }

/* mixer window */
.mixer { position: absolute; left: 104px; top: 418px; width: 1036px; height: 302px; box-sizing: border-box; border: 1px solid #0c1216; border-width: 1px 1px 0; box-shadow: inset 0 2px #868d93, inset 2px 0 #868d93, inset -2px 0 #868d93; background: #5e656c; padding: 3px 4px 0; }
.mix-title { display: flex; align-items: center; height: 19px; border-top: 1px solid #141b1f; border-bottom: 1px solid #11171b; box-sizing: border-box; background: #60676f; }
.mix-btn { width: 12px; height: 12px; border: 1px solid #12181c; background: #747b82; }
.mix-btn:first-child { margin-left: 1px; background: #535b62; }
.mix-btn.close { margin-left: auto; margin-right: 0; }
.mix-scroll { width: 110px; height: 12px; margin-left: 4px; border: 1px solid #161d22; background: #3c444b; }
.mix-scroll i { display: block; width: 16px; height: 12px; background: repeating-linear-gradient(90deg, #727980 0 4px, #565d64 4px 5px); }
.mix-name { margin-left: 5px; font: 11px/16px "Open Sans", sans-serif; color: #d0d7da; letter-spacing: -.1px; }
.mix-body { display: flex; height: 277px; }
.strips { display: flex; width: 789px; flex: none; overflow: hidden; }
.strip { width: 18.750px; flex: none; }
.strip-head { position: relative; height: 85px; box-sizing: border-box; border-left: 1px solid #1b2126; border-bottom: 1px solid #11171b; display: flex; flex-direction: column; align-items: center; color: #c5cdd1; background: #394047; }
.kind { height: 9px; font: 6px/9px "DejaVu Sans Mono", monospace; color: #7b848a; }
.num { height: 10px; width: 12px; border: 1px solid #0f1417; box-sizing: content-box; background: #51474d; font: 9.500px/11px "Liberation Sans", sans-serif; text-align: right; color: #ece7ea; }
.num.letter { background: #495158; color: #838c92; text-align: center; margin-top: -7px; height: 17px; line-height: 17px; }
.name { height: 61px; width: 17px; margin-top: 0; padding-top: 2px; box-sizing: border-box; writing-mode: vertical-rl; transform: rotate(180deg); white-space: nowrap; font: 9.400px/17px "Open Sans", "Noto Sans", sans-serif; letter-spacing: -.2px; }
.strip-head.blue { background: #344049; }
.strip-head.red { background: #513a40; }
.strip-head.green { background: #3a4738; color: #c3cfae; }
.strip-head.teal { background: #34484d; color: #abc8d0; }
.strip-head.purple { background: #3c3e5a; }
.strip-head.violet { background: #4a3d5b; }
.strip-head.brown { background: #493f3b; }
.strip-head.picked { background: #80696f; color: #eee6e8; }
.strip-head.dim { color: #8b949a; }
.pick { position: absolute; left: 4px; top: 0; border: 5px solid transparent; border-top: 5px solid #edf1f3; border-bottom: 0; }
.frame { fill: #0c120c; stroke: #90979d; stroke-width: .9; }
.knob-ring { fill: #444c53; stroke: #8d959c; stroke-width: .9; }
.scale-lines { stroke: #7c848b; stroke-width: .6; }
.big-meter { flex: none; background: #5f666d; }
.db { font: 6.500px "DejaVu Sans Mono", monospace; fill: #bcc3c8; text-anchor: end; }
.fx { width: 201px; flex: none; overflow: hidden; }
.fx-in { height: 26px; box-sizing: border-box; display: flex; align-items: center; justify-content: space-between; padding: 0 4px 2px 12px; border-bottom: 1px solid #151b1f; background: #5b6269; }
.in { font: italic bold 12px "Liberation Sans", sans-serif; color: #7a8188; }
.none { width: 139px; height: 15px; padding-left: 4px; border: 1px solid #070b0d; background: #151a22; font: 9.500px/14px "DejaVu Sans Condensed", "DejaVu Sans", sans-serif; color: #4d555d; }
.slot { display: flex; align-items: center; height: 19.600px; box-sizing: border-box; border-bottom: 1px solid #141a1e; border-top: 1px solid #72797f; background: #5c636a; }
.slot-btn { width: 9px; height: 13px; margin-left: 2px; border: 1px solid #11171a; background: #4a5259; }
.slot-name { width: 145px; height: 13px; margin-left: 3px; padding-left: 4px; border: 1px solid #12191d; background: #44565b; font: 10.500px/13px "Open Sans", sans-serif; color: #d3e4e6; }
.slot-no { margin-left: 29px; font: italic bold 13px "Liberation Sans", sans-serif; color: #7b8289; }
.slot-ctl { margin-left: auto; }
.eq-grid { stroke: #798087; fill: none; stroke-width: .8; }

.cursor { position: absolute; left: 663px; top: 569px; width: 14px; height: 20px; }

/* taskbar */
.taskbar { position: absolute; left: 2px; top: 681px; width: 1278px; height: 37px; box-sizing: border-box; display: flex; align-items: center; background: linear-gradient(90deg, #1e4468 0 102px, rgba(46, 112, 172, .62) 102px 1138px, #1d4369 1138px); border-top: 1px solid rgba(110, 150, 185, .45); }
.start { width: 46px; display: flex; justify-content: center; }
.task { width: 55px; height: 36px; flex: none; margin-right: 3.200px; box-sizing: border-box; display: flex; align-items: center; justify-content: center; border: 1px solid transparent; }
.task svg { width: 30px; height: 30px; }
.task svg.sm { width: 25px; height: 25px; }
.task.active { background: rgba(190, 210, 225, .5); border-color: #c0d3e1; }
.task.open { background: rgba(150, 180, 205, .35); border-color: rgba(170, 195, 215, .5); }
.ps { width: 24px; height: 23px; border: 2px solid #9bc2e6; background: #101e57; color: #c4e0f7; font: bold 15px/22px "Open Sans", sans-serif; text-align: center; }
.live { width: 27px; height: 26px; background: #6b7075; color: #e8ebed; font: 11.500px/27px "Open Sans", sans-serif; text-align: center; }
.word { font: bold 13px "Open Sans", sans-serif; fill: #fff; }
.tray { margin-left: auto; display: flex; align-items: center; padding-right: 12px; gap: 7px; }
.time { width: 62px; display: flex; flex-direction: column; align-items: center; font: 11.200px/16px "Open Sans", sans-serif; color: #f1f5f8; letter-spacing: -.4px; }
</style>
